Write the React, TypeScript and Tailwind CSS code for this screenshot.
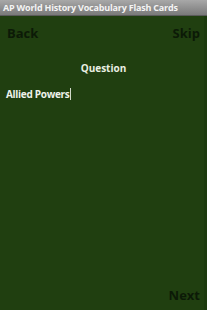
export default function App() {
  return (
    <div
      className="relative flex h-[310px] w-[207px] flex-col overflow-hidden bg-[#203f10]"
      style={{ fontFamily: '"Open Sans", "DejaVu Sans", sans-serif' }}
    >
      {/* title bar */}
      <div className="flex h-[16px] items-center border-b border-[#5a5a5a] bg-gradient-to-b from-[#a8a8a8] to-[#7a7a7a] pl-[3px]">
        <span className="whitespace-nowrap text-[9px] font-bold leading-none tracking-[-0.2px] text-[#f4f4f4]">
          AP World History Vocabulary Flash Cards
        </span>
      </div>

      {/* back / skip */}
      <div className="mt-[8px] flex items-center justify-between px-[7px] text-[13px] font-bold leading-[18px] text-[#0c1a07]">
        <span>Back</span>
        <span>Skip</span>
      </div>

      <div className="mt-[19px] text-center text-[10px] font-bold leading-[14px] text-[#e9efe2]">
        Question
      </div>

      <div className="mt-[12px] flex items-center px-[6px] text-[10px] font-bold leading-[14px] tracking-[-0.3px] text-[#eef2ea]">
        <span>Allied Powers</span>
        <span className="ml-[1px] h-[12px] w-[1px] bg-[#cfd8c8]" />
      </div>

      <div className="mt-auto mb-[6px] flex justify-end px-[7px] text-[13px] font-bold leading-[18px] text-[#0c1a07]">
        <span>Next</span>
      </div>

      <div className="absolute right-0 top-[16px] bottom-0 w-[3px] bg-[#1b3a0d]" />
    </div>
  );
}
